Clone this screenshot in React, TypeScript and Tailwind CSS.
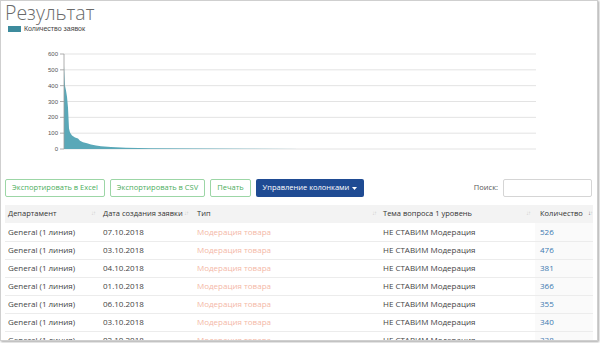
import React from 'react'

const rows = [
  { date: '07.10.2018', count: 526 },
  { date: '03.10.2018', count: 476 },
  { date: '04.10.2018', count: 381 },
  { date: '01.10.2018', count: 366 },
  { date: '06.10.2018', count: 355 },
  { date: '03.10.2018', count: 340 },
  { date: '02.10.2018', count: 338 },
]

// x position (px) and value pairs for the area chart
const series: [number, number][] = [
  [63, 526], [64, 400], [65, 370], [66, 330], [67, 260], [68, 130], [69, 105],
  [71, 85], [74, 72], [77, 66], [79, 52], [82, 42], [86, 36], [90, 29],
  [95, 23], [100, 18], [110, 12], [125, 8], [150, 5], [200, 3], [250, 1.5],
  [300, 0.6], [535, 0],
]

const yOf = (v: number) => 116 - v * (95 / 600)

function Chart() {
  const ticks = [0, 100, 200, 300, 400, 500, 600]
  const pts = series.map(([x, v]) => `${x},${yOf(v).toFixed(1)}`).join(' L')
  const area = `M63,116 L${pts} L535,116 Z`
  return (
    <svg width="600" height="124" className="block">
      {ticks.map((t) => (
        <g key={t}>
          <line x1="63" x2="535" y1={yOf(t)} y2={yOf(t)} stroke="#e3e3e3" strokeWidth="1" />
          <line x1="59" x2="63" y1={yOf(t)} y2={yOf(t)} stroke="#999" strokeWidth="0.8" />
          <text x="57" y={yOf(t) + 2} textAnchor="end" fontSize="6" fill="#555" fontFamily="Liberation Sans, Arial, sans-serif">
            {t}
          </text>
        </g>
      ))}
      <path d={area} fill="#5aa8b8" />
      <line x1="63" x2="63" y1={yOf(600)} y2="116" stroke="#999" strokeWidth="0.8" />
    </svg>
  )
}

function SortIcon({ active }: { active?: boolean }) {
  return (
    <span className="text-[6px] tracking-[-1px] leading-none">
      <span className={active ? 'text-[#666]' : 'text-[#ccc]'}>↓</span>
      <span className="text-[#ccc]">↑</span>
    </span>
  )
}

export default function App() {
  return (
    <div className="w-[600px] h-[343px] bg-white overflow-hidden">
      <div
        className="w-[598px] h-[341px] border border-[#cfcfcf] shadow-[1px_1px_2px_rgba(0,0,0,0.35)] overflow-hidden"
        style={{ fontFamily: '"Open Sans", sans-serif' }}
      >
        <div className="px-1 pt-[1px] text-[19.5px] leading-[22px] text-[#6a6a6a] font-light">Результат</div>
        <div className="flex items-center gap-[3px] pl-[7px] mt-[1px] h-[8px]">
          <span className="w-[13px] h-[6px] bg-[#3d8b9d]" />
          <span className="text-[7px] text-[#444]" style={{ fontFamily: '"Liberation Sans", Arial, sans-serif' }}>
            Количество заявок
          </span>
        </div>
        <Chart />
        <div className="flex items-center gap-[5px] px-1 mt-[22px] text-[7.5px] leading-none">
          <button className="h-[18px] w-[100px] border border-[#9cd6a6] rounded-[2px] text-[#4cae5c]">
            Экспортировать в Excel
          </button>
          <button className="h-[18px] w-[95px] border border-[#9cd6a6] rounded-[2px] text-[#4cae5c]">
            Экспортировать в CSV
          </button>
          <button className="h-[18px] w-[41px] border border-[#9cd6a6] rounded-[2px] text-[#4cae5c]">
            Печать
          </button>
          <button className="h-[18px] w-[108px] bg-[#1f4b93] rounded-[2px] text-white flex items-center justify-center gap-[3px]">
            Управление колонками
            <svg width="5" height="3" viewBox="0 0 5 3">
              <path d="M0 0 L5 0 L2.5 3 Z" fill="white" />
            </svg>
          </button>
          <div className="flex-1" />
          <span className="text-[#555]">Поиск:</span>
          <input className="h-[18px] w-[89px] border border-[#d5d5d5] rounded-[2px] mr-[1px]" />
        </div>
        <table className="ml-1 mt-[8px] w-[588px] border-collapse text-[8px] leading-none table-fixed">
          <colgroup>
            <col className="w-[93px]" />
            <col className="w-[94px]" />
            <col className="w-[186px]" />
            <col className="w-[157px]" />
            <col className="w-[58px]" />
          </colgroup>
          <thead>
            <tr className="h-[18px] bg-[#f3f3f3] text-[#333] text-left text-[7.5px] whitespace-nowrap">
              <th className="font-normal pl-[3px]">
                <div className="flex justify-between pr-[3px]">Департамент<SortIcon /></div>
              </th>
              <th className="font-normal pl-[5px]">
                <div className="flex justify-between pr-[4px]">Дата создания заявки<SortIcon /></div>
              </th>
              <th className="font-normal pl-[5px]">
                <div className="flex justify-between pr-[2px]">Тип<SortIcon /></div>
              </th>
              <th className="font-normal pl-[5px]">
                <div className="flex justify-between pr-[5px]">Тема вопроса 1 уровень<SortIcon /></div>
              </th>
              <th className="font-normal pl-[5px]">
                <div className="flex justify-between pr-[1px]">Количество<SortIcon active /></div>
              </th>
            </tr>
          </thead>
          <tbody>
            {rows.map((r, i) => (
              <tr key={i} className="h-[18px] border-b border-[#ececec] text-[#444] whitespace-nowrap">
                <td className="pl-[3px]">General (1 линия)</td>
                <td className="pl-[5px]">{r.date}</td>
                <td className="pl-[5px] text-[#f4b8a6]">Модерация товара</td>
                <td className="pl-[5px]">НЕ СТАВИМ Модерация</td>
                <td className="pl-[5px] bg-[#fafafa] text-[#3a79b0]">{r.count}</td>
              </tr>
            ))}
          </tbody>
        </table>
      </div>
    </div>
  )
}
